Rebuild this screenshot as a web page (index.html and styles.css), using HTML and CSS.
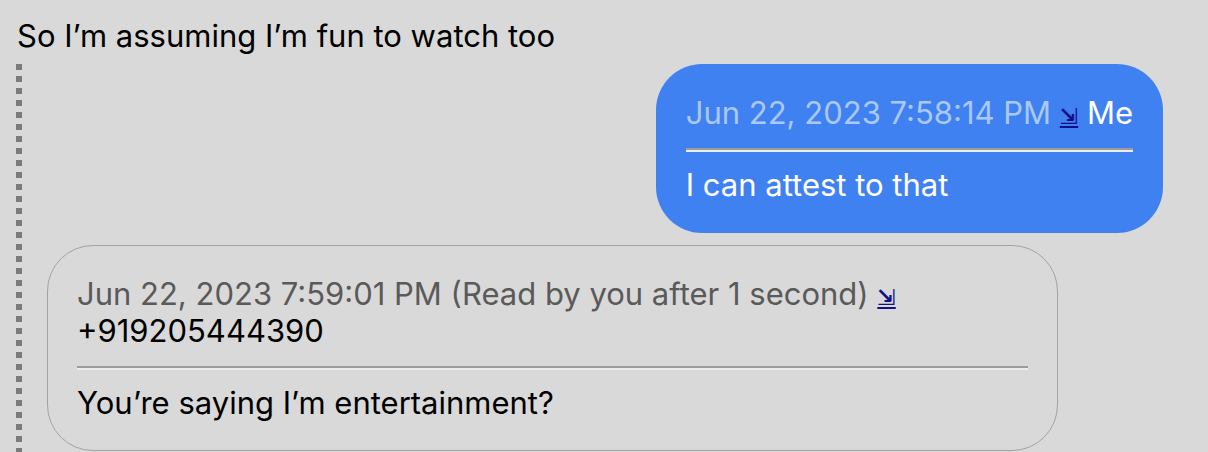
FILE: index.html
```html
<!DOCTYPE html>
<html lang="en">
<head>
<meta charset="utf-8">
<title>Conversation</title>
<link rel="stylesheet" href="styles.css">
</head>
<body>
<div class="conversation">
  <div class="parent-text">So I’m assuming I’m fun to watch too</div>
  <div class="thread">
    <div class="message sent">
      <div class="bubble bubble-sent">
        <p class="header"><span class="timestamp">Jun 22, 2023 7:58:14 PM <a class="jump" href="#">⇲</a></span> <span class="sender">Me</span></p>
        <hr class="divider">
        <p class="text">I can attest to that</p>
      </div>
    </div>
    <div class="message received">
      <div class="bubble bubble-received">
        <p class="header"><span class="timestamp">Jun 22, 2023 7:59:01 PM (Read by you after 1 second) <a class="jump" href="#">⇲</a></span> <span class="sender">+919205444390</span></p>
        <hr class="divider">
        <p class="text">You’re saying I’m entertainment?</p>
      </div>
    </div>
  </div>
</div>
</body>
</html>
```

FILE: styles.css
```css
* { box-sizing: border-box; }

html, body {
  margin: 0;
  height: 100%;
  overflow: hidden;
}

body {
  background: #d9d9d9;
  color: #000;
  font-family: Inter, "Liberation Sans", sans-serif;
  font-size: 31px;
  line-height: 37px;
}

.conversation {
  padding: 17px 0 0 16px;
}

.parent-text {
  padding-left: 1px;
}

.thread {
  margin-top: 10px;
  padding: 0 0 40px 6px;
  display: flex;
  flex-direction: column;
  gap: 12px;
  background: repeating-linear-gradient(to bottom, #7b7b7b 0 6px, transparent 6px 12px) 0 0 / 6px 100% no-repeat;
}

.message {
  display: flex;
}

.message.sent {
  justify-content: flex-end;
  padding-right: 45px;
}

.message.received {
  justify-content: flex-start;
  padding-left: 25px;
}

.bubble {
  padding: 30px;
  border-radius: 46px;
  max-width: 1011px;
}

.bubble-sent {
  background: #4081f2;
  color: #fff;
}

.bubble-received {
  border: 1.5px solid #a3a3a3;
  padding: 29px;
}

.header,
.text {
  margin: 0;
}

.bubble-sent .timestamp {
  color: #aac8f8;
}

.bubble-received .timestamp {
  color: #5a5a5a;
}

.jump {
  font-family: "DejaVu Sans", sans-serif;
  font-size: 22px;
  line-height: 1;
  font-weight: bold;
  color: #10108a;
  text-decoration: underline;
}

.divider {
  margin: 17px 0 14px;
  height: 0;
  border: 0;
  border-top: 2px solid #9c9c9c;
  border-bottom: 2px solid #ececec;
}
```
